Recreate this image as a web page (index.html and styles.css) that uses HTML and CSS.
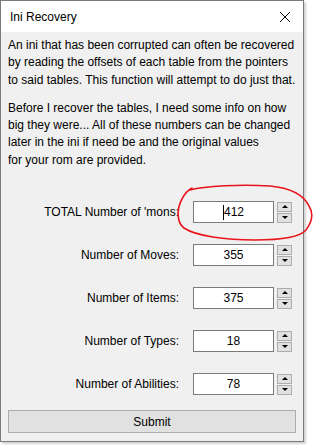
FILE: index.html
```html
<!DOCTYPE html>
<html>
<head>
<meta charset="utf-8">
<link rel="stylesheet" href="styles.css">
</head>
<body>
<div class="window">
  <div class="titlebar">
    <span class="title">Ini Recovery</span>
    <svg class="close" width="12" height="12" viewBox="0 0 12 12"><path d="M1 1 L11 11 M11 1 L1 11" stroke="#000" stroke-width="1"/></svg>
  </div>
  <div class="content">
    <p class="para">An ini that has been corrupted can often be recovered<br>by reading the offsets of each table from the pointers<br>to said tables. This function will attempt to do just that.</p>
    <p class="para para2">Before I recover the tables, I need some info on how<br>big they were... All of these numbers can be changed<br>later in the ini if need be and the original values<br>for your rom are provided.</p>
    <div class="form">
      <div class="row">
        <span class="label">TOTAL Number of 'mons:</span>
        <div class="input"><span class="caret"></span>412</div>
        <div class="spin"><div class="sbtn"><span class="up"></span></div><div class="sbtn"><span class="down"></span></div></div>
      </div>
      <div class="row">
        <span class="label">Number of Moves:</span>
        <div class="input">355</div>
        <div class="spin"><div class="sbtn"><span class="up"></span></div><div class="sbtn"><span class="down"></span></div></div>
      </div>
      <div class="row">
        <span class="label">Number of Items:</span>
        <div class="input">375</div>
        <div class="spin"><div class="sbtn"><span class="up"></span></div><div class="sbtn"><span class="down"></span></div></div>
      </div>
      <div class="row">
        <span class="label">Number of Types:</span>
        <div class="input">18</div>
        <div class="spin"><div class="sbtn"><span class="up"></span></div><div class="sbtn"><span class="down"></span></div></div>
      </div>
      <div class="row">
        <span class="label">Number of Abilities:</span>
        <div class="input">78</div>
        <div class="spin"><div class="sbtn"><span class="up"></span></div><div class="sbtn"><span class="down"></span></div></div>
      </div>
    </div>
    <div class="submit">Submit</div>
  </div>
</div>
<svg class="scribble" width="315" height="445" viewBox="0 0 315 445">
  <path d="M190 190 C 205 186, 240 184, 270 186 C 292 188, 304 196, 309 206 C 314 214, 312 222, 306 230 C 300 237, 285 240, 255 240 C 225 240, 196 236, 184 228 C 176 222, 177 208, 182 199 C 185 193, 188 190, 192 188" fill="none" stroke="#e8141b" stroke-width="1.6" stroke-linecap="round"/>
</svg>
</body>
</html>
```
FILE: styles.css
```css
html, body {
  margin: 0;
  padding: 0;
  background: #ffffff;
}
body {
  width: 315px;
  height: 445px;
  overflow: hidden;
  font-family: "Liberation Sans", Arial, sans-serif;
  font-size: 12px;
  color: #000;
}
.window {
  width: 302px;
  height: 440px;
  border: 1px solid #7a7a7a;
  background: #f0f0f0;
  box-shadow: 2px 2px 2px rgba(0,0,0,0.18);
  display: flex;
  flex-direction: column;
}
.titlebar {
  height: 31px;
  background: #ffffff;
  display: flex;
  align-items: center;
  justify-content: space-between;
  padding: 0 10px 0 9px;
}
.title {
  font-size: 12px;
}
.close {
  display: block;
  margin-right: 2px;
}
.content {
  flex: 1;
  padding: 5px 7px 0 7px;
  display: flex;
  flex-direction: column;
}
.para {
  margin: 0;
  line-height: 17.3px;
  white-space: nowrap;
}
.para2 {
  margin-top: 11px;
}
.form {
  margin-top: 32px;
  display: flex;
  flex-direction: column;
  gap: 21px;
}
.row {
  display: flex;
  align-items: center;
  height: 22px;
}
.label {
  width: 171px;
  text-align: right;
  margin-right: 14px;
  white-space: nowrap;
}
.input {
  position: relative;
  width: 79px;
  height: 20px;
  border: 1px solid #7a7a7a;
  background: #fff;
  display: flex;
  align-items: center;
  justify-content: center;
  font-size: 12px;
}
.caret {
  display: inline-block;
  width: 1px;
  height: 15px;
  background: #000;
}
.spin {
  margin-left: 3px;
  display: flex;
  flex-direction: column;
  gap: 1px;
}
.sbtn {
  width: 13px;
  height: 8px;
  border: 1px solid #adadad;
  background: #e1e1e1;
  display: flex;
  align-items: center;
  justify-content: center;
}
.up {
  width: 0;
  height: 0;
  border-left: 3px solid transparent;
  border-right: 3px solid transparent;
  border-bottom: 3px solid #000;
}
.down {
  width: 0;
  height: 0;
  border-left: 3px solid transparent;
  border-right: 3px solid transparent;
  border-top: 3px solid #000;
}
.submit {
  margin-top: 15px;
  height: 21px;
  border: 1px solid #adadad;
  background: #e1e1e1;
  display: flex;
  align-items: center;
  justify-content: center;
}
.scribble {
  position: absolute;
  left: 0;
  top: 0;
  pointer-events: none;
}
```
